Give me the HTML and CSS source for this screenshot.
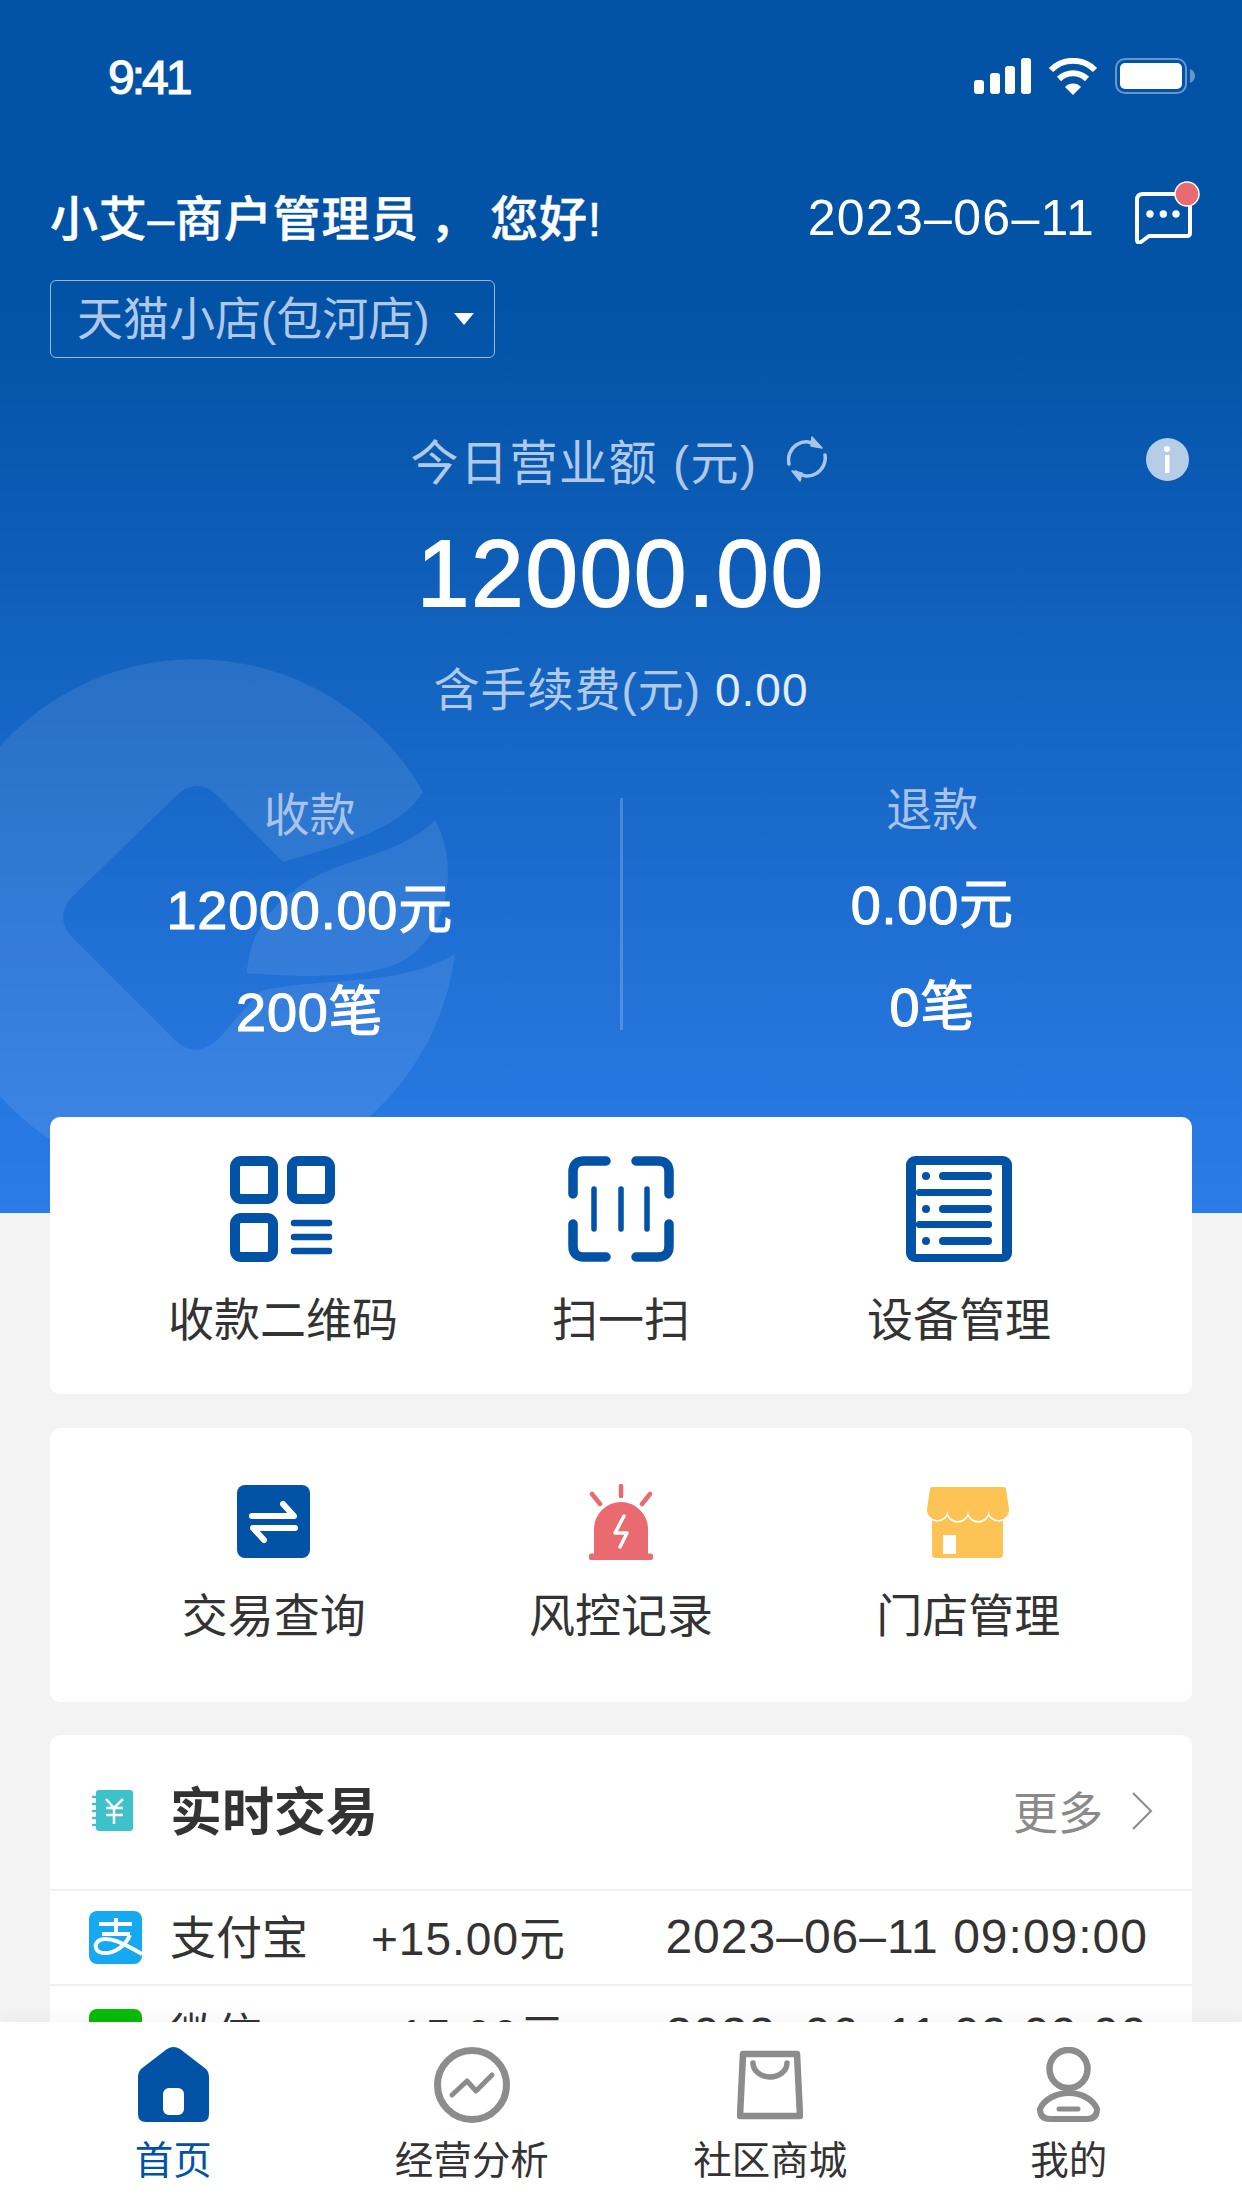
FILE: index.html
```html
<!DOCTYPE html>
<html lang="zh-CN">
<head>
    <meta charset="utf-8">
    <title>首页</title>
    <link rel="stylesheet" href="styles.css">
</head>
<body>
<div class="phone">
    <div class="main">
        <div class="hero-bg">
            <svg class="hero-mark" width="1242" height="1213" viewBox="0 0 1242 1213">
                <path d="M423 792A262 262 0 1 0 455 954C420 975 380 978 333 982C300 984 275 987 260 991L222 1035Q197 1062 175 1040L74 939Q52 917 74 895L175 797Q197 775 219 797L283 862C340 845 400 830 423 792Z"/>
                <path d="M435 820C405 850 365 855 333 869C290 885 250 920 247 973C300 978 370 978 400 962C445 940 462 870 435 820Z"/>
            </svg>
        </div>

        <div class="status-bar">
            <span class="status-time">9:41</span>
            <div class="status-icons">
                <svg width="57" height="36" viewBox="0 0 57 36" fill="#fff">
                    <rect x="0" y="22" width="10" height="14" rx="3"/>
                    <rect x="16" y="15" width="10" height="21" rx="3"/>
                    <rect x="31" y="8" width="10" height="28" rx="3"/>
                    <rect x="47" y="0" width="10" height="36" rx="3"/>
                </svg>
                <svg width="50" height="37" viewBox="0 0 50 37">
                    <path d="M3 12A31 31 0 0 1 47 12" fill="none" stroke="#fff" stroke-width="6"/>
                    <path d="M11 21A20 20 0 0 1 39 21" fill="none" stroke="#fff" stroke-width="6"/>
                    <path d="M25 37L17 29A11 11 0 0 1 33 29Z" fill="#fff"/>
                </svg>
                <svg width="80" height="36" viewBox="0 0 80 36">
                    <rect x="1" y="1" width="70" height="34" rx="9" fill="none" stroke="#fff" stroke-opacity=".4" stroke-width="2"/>
                    <rect x="5" y="5" width="62" height="26" rx="5" fill="#fff"/>
                    <path d="M75 11Q80 13 80 18Q80 23 75 25Z" fill="#fff" fill-opacity=".4"/>
                </svg>
            </div>
        </div>

        <div class="top-row">
            <div class="greeting">小艾–商户管理员 ， 您好!</div>
            <div class="top-right">
                <span class="today">2023–06–11</span>
                <svg class="msg-icon" width="66" height="64" viewBox="0 0 66 64">
                    <path d="M8 14H52Q55 14 55 17V53Q55 56 52 56H14L6 62Q2 64 2 60V20Q2 14 8 14Z" fill="none" stroke="#fff" stroke-width="4" stroke-linejoin="round"/>
                    <circle cx="15" cy="34" r="3.7" fill="#fff"/>
                    <circle cx="28.3" cy="34" r="3.7" fill="#fff"/>
                    <circle cx="41" cy="34" r="3.7" fill="#fff"/>
                    <circle cx="52" cy="14" r="12" fill="#e96a6f" stroke="#fff" stroke-width="1.5"/>
                </svg>
            </div>
        </div>

        <div class="shop-select">
            <span class="shop-name">天猫小店(包河店)</span>
            <i class="caret"></i>
        </div>

        <div class="turnover">
            <div class="turnover-title">
                <span>今日营业额 (元)</span>
                <svg width="40" height="46" viewBox="0 0 40 46" fill="none" stroke="#a9c6ea" stroke-width="3.5" stroke-linecap="round">
                    <path d="M2 28A18 18 0 0 1 31 10"/>
                    <path d="M25 1L35 12L24 10Z" fill="#a9c6ea" stroke-width="1.5" stroke-linejoin="round"/>
                    <path d="M38 19A18 18 0 0 1 9 36"/>
                    <path d="M5 35L13 45L15 37Z" fill="#a9c6ea" stroke-width="1.5" stroke-linejoin="round"/>
                </svg>
            </div>
            <svg class="info-icon" width="43" height="43" viewBox="0 0 43 43">
                <circle cx="21.500" cy="21.500" r="21.500" fill="#b6cde8"/>
                <circle cx="21" cy="11" r="3" fill="#fff"/>
                <rect x="19" y="17" width="4.500" height="18" fill="#fff"/>
            </svg>
        </div>

        <div class="total">12000.00</div>
        <div class="fee"><span>含手续费(元)</span> <b>0.00</b></div>

        <div class="stats">
            <div class="stat stat-left">
                <div class="stat-label">收款</div>
                <div class="stat-value">12000.00元</div>
                <div class="stat-value">200笔</div>
            </div>
            <div class="stat-divider"></div>
            <div class="stat stat-right">
                <div class="stat-label">退款</div>
                <div class="stat-value">0.00元</div>
                <div class="stat-value">0笔</div>
            </div>
        </div>

        <div class="card card-main">
            <div class="entry">
                <svg width="106" height="106" viewBox="0 0 106 106" fill="none" stroke="#0252a6">
                    <rect x="5" y="5" width="38" height="38" rx="6" stroke-width="10"/>
                    <rect x="62" y="5" width="38" height="38" rx="6" stroke-width="10"/>
                    <rect x="5" y="62" width="38" height="39" rx="6" stroke-width="10"/>
                    <path d="M64 67H99M64 81H99M64 95H99" stroke-width="6.500" stroke-linecap="round"/>
                </svg>
                <span>收款二维码</span>
            </div>
            <div class="entry">
                <svg width="106" height="106" viewBox="0 0 106 106" fill="none" stroke="#0252a6" stroke-linecap="round">
                    <path d="M38 5H16Q5 5 5 16V38" stroke-width="9.500"/>
                    <path d="M68 5H90Q101 5 101 16V38" stroke-width="9.500"/>
                    <path d="M38 101H16Q5 101 5 90V68" stroke-width="9.500"/>
                    <path d="M68 101H90Q101 101 101 90V68" stroke-width="9.500"/>
                    <path d="M26 33V73M53 33V73M79 33V73" stroke-width="5.500"/>
                </svg>
                <span>扫一扫</span>
            </div>
            <div class="entry">
                <svg width="106" height="106" viewBox="0 0 106 106">
                    <rect x="0" y="0" width="106" height="106" rx="9" fill="#0252a6"/>
                    <rect x="10" y="9" width="86" height="89" fill="#fff"/>
                    <g fill="#0252a6">
                        <circle cx="20" cy="20" r="4"/>
                        <circle cx="20" cy="53" r="4"/>
                        <circle cx="20" cy="85" r="4"/>
                        <rect x="33" y="16" width="53" height="8" rx="4"/>
                        <rect x="33" y="49" width="53" height="8" rx="4"/>
                        <rect x="33" y="81" width="53" height="8" rx="4"/>
                        <rect x="10" y="33" width="76" height="7" rx="3"/>
                        <rect x="10" y="65" width="76" height="7" rx="3"/>
                    </g>
                </svg>
                <span>设备管理</span>
            </div>
        </div>

        <div class="card card-tools">
            <div class="entry">
                <svg width="73" height="76" viewBox="0 0 73 76">
                    <rect x="0" y="1" width="73" height="73" rx="8" fill="#0252a6"/>
                    <path d="M15 32H57L46 20M58 44H16L27 56" fill="none" stroke="#fff" stroke-width="6" stroke-linecap="round" stroke-linejoin="round"/>
                </svg>
                <span>交易查询</span>
            </div>
            <div class="entry">
                <svg width="64" height="76" viewBox="0 0 64 76" fill="#e96a6f">
                    <path d="M32 2V12M3 10L11 20M61 10L53 20" fill="none" stroke="#e96a6f" stroke-width="4.500" stroke-linecap="round"/>
                    <path d="M5 70V45A27 27 0 0 1 59 45V70Z"/>
                    <rect x="0" y="69.500" width="64" height="6.500" rx="2"/>
                    <path d="M35 32L26 49H38L31 63" fill="none" stroke="#fff" stroke-width="3.500" stroke-linecap="round" stroke-linejoin="round"/>
                </svg>
                <span>风控记录</span>
            </div>
            <div class="entry">
                <svg width="82" height="76" viewBox="0 0 82 76" fill="#fdc455">
                    <rect x="5" y="20" width="71" height="54" rx="4"/>
                    <path d="M3 5Q3 3 6 3H76Q79 3 79 5L82 25A10.250 10 0 0 1 61.500 27A10.250 10 0 0 1 41 27A10.250 10 0 0 1 20.500 27A10.250 10 0 0 1 0 25Z" stroke="#fff" stroke-width="3" paint-order="stroke"/>
                    <rect x="16" y="51" width="13" height="19" fill="#fff"/>
                </svg>
                <span>门店管理</span>
            </div>
        </div>

        <div class="card card-trade">
            <div class="trade-head">
                <svg width="44" height="44" viewBox="0 0 44 44">
                    <rect x="4" y="1" width="37" height="41" rx="3" fill="#3fc1cb"/>
                    <path d="M1 8H5M1 15H5M1 22H5M1 29H5M1 36H5" stroke="#3fc1cb" stroke-width="2.500" stroke-linecap="round"/>
                    <path d="M14 10L22 19L31 10M14 19H31M14 26H31M22 19V35" fill="none" stroke="#fff" stroke-width="2.500"/>
                </svg>
                <span class="trade-title">实时交易</span>
                <span class="trade-more">更多</span>
                <svg width="22" height="38" viewBox="0 0 22 38" fill="none" stroke="#8a8a8a" stroke-width="2">
                    <path d="M2 1L20 19L2 37"/>
                </svg>
            </div>
            <div class="trade-row">
                <svg width="53" height="53" viewBox="0 0 53 53">
                    <rect width="53" height="53" rx="8" fill="#14a9f1"/>
                    <path d="M10 13H43M27 7V23M13 23H41M41 24C36 36 24 43 14 42C6 41 4 33 11 29C20 25 34 32 53 43" fill="none" stroke="#fff" stroke-width="4"/>
                </svg>
                <span class="trade-name">支付宝</span>
                <span class="trade-amount">+15.00元</span>
                <span class="trade-time">2023–06–11 09:09:00</span>
            </div>
            <div class="trade-row">
                <svg width="53" height="53" viewBox="0 0 53 53">
                    <rect width="53" height="53" rx="8" fill="#09bb07"/>
                    <ellipse cx="26" cy="27" rx="17" ry="14" fill="#fff"/>
                </svg>
                <span class="trade-name">微信</span>
                <span class="trade-amount">+15.00元</span>
                <span class="trade-time">2023–06–11 09:09:00</span>
            </div>
        </div>
    </div>

    <div class="tab-bar">
        <div class="tab tab-active">
            <svg width="71" height="76" viewBox="0 0 71 76" fill="#0252a6">
                <path d="M29 2Q35.500 -2 42 2L68 22Q71 25 71 29V67Q71 75 63 75H8Q0 75 0 67V29Q0 25 3 22Z"/>
                <rect x="25" y="41" width="21" height="27" rx="6" fill="#fff"/>
            </svg>
            <span>首页</span>
        </div>
        <div class="tab">
            <svg width="76" height="76" viewBox="0 0 76 76" fill="none" stroke="#8c8c8c">
                <circle cx="38" cy="38" r="34.500" stroke-width="7"/>
                <path d="M18 48L33 34L42 44L58 28" stroke-width="5" stroke-linecap="round" stroke-linejoin="round"/>
            </svg>
            <span>经营分析</span>
        </div>
        <div class="tab">
            <svg width="66" height="76" viewBox="0 0 66 76" fill="none" stroke="#8c8c8c">
                <path d="M6 7H60L63 69H3Z" stroke-width="6.500" stroke-linejoin="round"/>
                <path d="M16 16A17 14 0 0 0 50 16" stroke-width="5.500" stroke-linecap="round"/>
            </svg>
            <span>社区商城</span>
        </div>
        <div class="tab">
            <svg width="63" height="76" viewBox="0 0 63 76" fill="none" stroke="#8c8c8c">
                <circle cx="31.500" cy="22" r="19" stroke-width="6.500"/>
                <path d="M13 72H50Q60 72 60 62C56 52 44 46 32 46C20 46 7 52 3 62Q3 72 13 72Z" stroke-width="6" stroke-linejoin="round"/>
                <path d="M22 62H41" stroke-width="5" stroke-linecap="round"/>
            </svg>
            <span>我的</span>
        </div>
    </div>
</div>
</body>
</html>
```

FILE: styles.css
```css
* {
    box-sizing: border-box;
}

body {
    margin: 0;
    background-color: #f3f3f3;
    color: #333;
    font-family: "Liberation Sans", "Noto Sans CJK SC", sans-serif;
}

svg {
    display: block;
    flex-shrink: 0;
}

.phone {
    width: 1242px;
    height: 2208px;
    display: flex;
    flex-direction: column;
    overflow: hidden;
}

.main {
    position: relative;
    flex: 1;
    min-height: 0;
    overflow: hidden;
}

.main > * {
    position: relative;
}

.main > .hero-bg {
    position: absolute;
    top: 0;
    left: 0;
    width: 100%;
    height: 1213px;
    overflow: hidden;
    background: linear-gradient(#0252a6 0, #0252a6 25%, #2c7ce8 100%);
}

.hero-mark path {
    fill: #fff;
    fill-opacity: 0.09;
}

/* status bar */
.status-bar {
    height: 152px;
    padding: 0 47px 0 108px;
    display: flex;
    align-items: center;
    justify-content: space-between;
    color: #fff;
}

.status-time {
    margin-top: 2px;
    font-size: 48px;
    letter-spacing: -3px;
    -webkit-text-stroke: 1.2px #fff;
}

.status-icons {
    display: flex;
    align-items: center;
    gap: 17px;
}

/* greeting */
.top-row {
    height: 70px;
    margin-top: 31px;
    padding: 0 41px 0 50px;
    display: flex;
    align-items: center;
    justify-content: space-between;
    color: #fff;
}

.greeting {
    margin-bottom: 6px;
    font-size: 48px;
    font-weight: 500;
    letter-spacing: 0.8px;
    word-spacing: -3px;
    white-space: pre;
    -webkit-text-stroke: 0.5px #fff;
}

.top-right {
    display: flex;
    align-items: center;
    gap: 40px;
}

.today {
    font-size: 50px;
    letter-spacing: 1.3px;
}

.msg-icon {
    margin-top: -12px;
}

.shop-select {
    width: 445px;
    height: 78px;
    margin: 27px 0 0 50px;
    padding-left: 26px;
    display: flex;
    align-items: center;
    gap: 24px;
    border: 1px solid rgba(255, 255, 255, 0.6);
    border-radius: 6px;
    color: #afc8e8;
    font-size: 46px;
}

.shop-name {
    margin-bottom: 8px;
}

.caret {
    width: 0;
    height: 0;
    border-left: 10px solid transparent;
    border-right: 10px solid transparent;
    border-top: 12px solid #fff;
}

/* turnover */
.turnover {
    height: 60px;
    margin-top: 66px;
    display: grid;
    grid-template-columns: 1fr auto 1fr;
    align-items: center;
}

.turnover-title {
    grid-column: 2;
    padding-right: 4px;
    display: flex;
    align-items: center;
    gap: 30px;
    color: #b0c9e8;
    font-size: 48px;
    letter-spacing: 1.5px;
}

.info-icon {
    justify-self: end;
    margin-right: 53px;
}

.total {
    height: 110px;
    margin-top: 35px;
    color: #fff;
    font-size: 94px;
    letter-spacing: 2px;
    line-height: 110px;
    text-align: center;
    -webkit-text-stroke: 1.8px #fff;
}

.fee {
    height: 60px;
    margin-top: 31px;
    color: #b0c9e8;
    font-size: 46px;
    letter-spacing: 1px;
    line-height: 60px;
    text-align: center;
}

.fee b {
    color: #e3ecf8;
    font-weight: 400;
}

/* stats */
.stats {
    height: 255px;
    margin-top: 55px;
    display: grid;
    grid-template-columns: 1fr 3px 1fr;
}

.stat {
    display: flex;
    flex-direction: column;
    align-items: center;
    gap: 35px;
}

.stat-left {
    padding-top: 10px;
}

.stat-right {
    padding-top: 5px;
}

.stat-divider {
    height: 232px;
    margin-top: 23px;
    background-color: rgba(255, 255, 255, 0.2);
}

.stat-label {
    height: 60px;
    color: #a8c3e8;
    font-size: 46px;
    line-height: 60px;
}

.stat-value {
    height: 60px;
    color: #fff;
    font-size: 54px;
    letter-spacing: 0.8px;
    line-height: 60px;
    -webkit-text-stroke: 1.1px #fff;
}

.stat-value + .stat-value {
    margin-top: 7px;
}

/* cards */
.card {
    margin: 0 50px;
    background-color: #fff;
    border-radius: 10px;
}

.card-main,
.card-tools {
    display: grid;
    grid-template-columns: repeat(3, 1fr);
}

.card-main {
    height: 277px;
    margin-top: 87px;
    padding: 39px 64px 0;
}

.card-tools {
    height: 274px;
    margin-top: 34px;
    padding: 56px 50px 0;
}

.entry {
    display: flex;
    flex-direction: column;
    align-items: center;
    font-size: 46px;
    line-height: 60px;
}

.card-main .entry {
    gap: 28px;
}

.card-tools .entry {
    gap: 26px;
}

.card-trade {
    margin-top: 33px;
    height: 400px;
}

.trade-head {
    height: 156px;
    padding: 0 39px 2px 42px;
    display: flex;
    align-items: center;
    border-bottom: 2px solid #f0f0f0;
}

.trade-title {
    margin: 0 0 6px 34px;
    font-size: 52px;
    font-weight: 700;
}

.trade-more {
    margin: 0 28px 2px auto;
    color: #8a8a8a;
    font-size: 45px;
}

.trade-row {
    height: 95px;
    padding: 0 44px 0 39px;
    display: flex;
    align-items: center;
    border-bottom: 2px solid #f0f0f0;
    font-size: 46px;
}

.trade-row + .trade-row {
    height: 100px;
}

.trade-name {
    width: 201px;
    margin: 0 0 8px 28px;
}

.trade-amount {
    margin-bottom: 6px;
    letter-spacing: 1px;
}

.trade-time {
    margin-left: auto;
    margin-bottom: 2px;
    font-size: 48px;
    letter-spacing: 1px;
}

/* tab bar */
.tab-bar {
    position: relative;
    height: 186px;
    padding: 25px 24px 0;
    display: grid;
    grid-template-columns: repeat(4, 1fr);
    background-color: #fff;
    box-shadow: 0 -6px 14px rgba(0, 0, 0, 0.03);
}

.tab {
    display: flex;
    flex-direction: column;
    align-items: center;
    gap: 13px;
    font-size: 38.5px;
    line-height: 50px;
}

.tab-active {
    color: #0252a6;
}
```
